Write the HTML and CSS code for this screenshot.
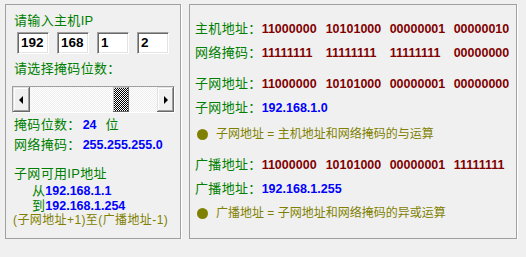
FILE: index.html
```html
<!DOCTYPE html>
<html>
<head>
<meta charset="utf-8">
<link rel="stylesheet" href="styles.css">
</head>
<body>
<div class="app">
  <section class="panel left">
    <div class="line g sp">请输入主机IP</div>
    <div class="ip-row">
      <div class="ipbox">192</div>
      <div class="ipbox">168</div>
      <div class="ipbox">1</div>
      <div class="ipbox">2</div>
    </div>
    <div class="line g sp choose">请选择掩码位数：</div>
    <div class="scroll">
      <div class="sbtn"><span class="arr-l"></span></div>
      <div class="track pre"></div>
      <div class="thumb"></div>
      <div class="track post"></div>
      <div class="sbtn"><span class="arr-r"></span></div>
    </div>
    <div class="line g sp kv1">掩码位数：<b class="num blue ml2">24</b><span class="unit">位</span></div>
    <div class="line g sp kv2">网络掩码：<b class="num blue ml2">255.255.255.0</b></div>
    <div class="line15 g sp avail">子网可用IP地址</div>
    <div class="line15 g sp from">从<b class="num blue">192.168.1.1</b></div>
    <div class="line15 g sp to">到<b class="num blue">192.168.1.254</b></div>
    <div class="line15 olive range">(子网地址+1)至(广播地址-1)</div>
  </section>

  <section class="panel right">
    <div class="line g sp">主机地址：<span class="bin"><span>11000000</span><span>10101000</span><span>00000001</span><span>00000010</span></span></div>
    <div class="line g sp r2">网络掩码：<span class="bin"><span>11111111</span><span>11111111</span><span>11111111</span><span>00000000</span></span></div>
    <div class="line g sp r3">子网地址：<span class="bin"><span>11000000</span><span>10101000</span><span>00000001</span><span>00000000</span></span></div>
    <div class="line g sp r4">子网地址：<b class="num blue">192.168.1.0</b></div>
    <div class="line olive note r5"><span class="dot"></span>子网地址 = 主机地址和网络掩码的与运算</div>
    <div class="line g sp r6">广播地址：<span class="bin"><span>11000000</span><span>10101000</span><span>00000001</span><span>11111111</span></span></div>
    <div class="line g sp r7">广播地址：<b class="num blue">192.168.1.255</b></div>
    <div class="line olive note r8"><span class="dot"></span>广播地址 = 子网地址和网络掩码的异或运算</div>
  </section>
</div>
</body>
</html>
```

FILE: styles.css
```css
* { box-sizing: border-box; }

body {
  margin: 0;
  background: #f0f0f0;
  font-family: "Liberation Sans", "Noto Sans CJK SC", sans-serif;
  font-size: 12px;
}

.app {
  display: flex;
  gap: 8px;
  padding: 4px 0 0 5px;
}

.panel {
  border: 1px solid #a0a0a0;
  box-shadow: 1px 1px 0 #ffffff;
  height: 235px;
}

.left {
  width: 176px;
  padding: 8px 0 0 8px;
}

.right {
  width: 328px;
  padding: 16px 0 0 5px;
}

.line {
  height: 16px;
  line-height: 16px;
  white-space: nowrap;
}

.line15 {
  height: 15px;
  line-height: 15px;
  white-space: nowrap;
}

.sp {
  font-size: 13px;
  letter-spacing: 0.33px;
}

.g { color: #008000; }
.blue { color: #0000ff; }
.olive { color: #808000; }

.num {
  font-family: "Liberation Sans", sans-serif;
  font-weight: bold;
  font-size: 12.5px;
  letter-spacing: 0;
}

.ml2 { margin-left: 2px; }
.unit { margin-left: 9px; }

/* IP input boxes */
.ip-row {
  display: flex;
  gap: 8px;
  margin: 3px 0 0 3px;
}

.ipbox {
  width: 32px;
  height: 22px;
  background: #ffffff;
  border-style: solid;
  border-width: 1px;
  border-color: #a0a0a0 #ffffff #ffffff #a0a0a0;
  box-shadow: inset 1px 1px 0 #696969, inset -1px -1px 0 #e3e3e3;
  padding-left: 3px;
  font-weight: bold;
  font-size: 13.5px;
  line-height: 20px;
  color: #000;
}

.choose { margin-top: 7px; }

/* scrollbar */
.scroll {
  display: flex;
  width: 163px;
  height: 27px;
  margin: 9px 0 0 -2px;
  border-style: solid;
  border-width: 1px;
  border-color: #a0a0a0 #ffffff #ffffff #a0a0a0;
}

.sbtn {
  width: 17px;
  flex: none;
  background: #f0f0f0;
  box-shadow: inset -1px -1px 0 #696969, inset 1px 1px 0 #e3e3e3, inset -2px -2px 0 #a0a0a0, inset 2px 2px 0 #ffffff;
  display: flex;
  align-items: center;
  justify-content: center;
}

.arr-l {
  width: 0;
  height: 0;
  border-top: 4px solid transparent;
  border-bottom: 4px solid transparent;
  border-right: 4px solid #000;
  margin-left: -2px;
}

.arr-r {
  width: 0;
  height: 0;
  border-top: 4px solid transparent;
  border-bottom: 4px solid transparent;
  border-left: 4px solid #000;
  margin-left: 1px;
}

.track {
  background: repeating-conic-gradient(#ffffff 0 25%, #eeeeee 0 50%) 0 0 / 2px 2px;
}

.track.pre { width: 83px; flex: none; }
.track.post { flex: 1; }

.thumb {
  width: 16px;
  flex: none;
  background: repeating-conic-gradient(#000000 0 25%, #ffffff 0 50%) 0 0 / 2px 2px;
  box-shadow: inset -1px -1px 0 #696969, inset 1px 1px 0 #c0c0c0;
}

.kv1 { margin-top: 4px; }
.kv2 { margin-top: 4px; }
.avail { margin-top: 13px; }
.from { margin: 2px 0 0 18px; }
.to { margin-left: 18px; }
.range {
  margin-left: -1px;
  letter-spacing: 0.4px;
}

/* right panel */
.bin {
  font-family: "Liberation Sans", sans-serif;
  font-weight: bold;
  font-size: 12.5px;
  letter-spacing: 0;
  color: #800000;
}

.bin span {
  display: inline-block;
  width: 64px;
}

.r2 { margin-top: 8px; }
.r3 { margin-top: 15px; }
.r4 { margin-top: 8px; }
.r5 { margin-top: 10px; }
.r6 { margin-top: 15px; }
.r7 { margin-top: 8px; }
.r8 { margin-top: 8px; }

.note {
  display: flex;
  align-items: center;
}

.dot {
  width: 11px;
  height: 11px;
  border-radius: 50%;
  background: #808000;
  margin: 0 8px 0 2px;
  flex: none;
}
```
